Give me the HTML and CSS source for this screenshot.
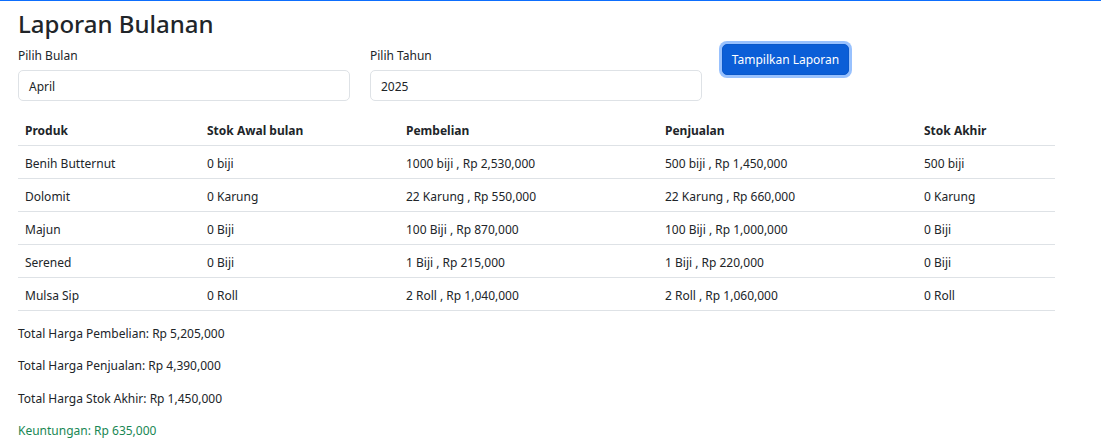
FILE: index.html
```html
<!DOCTYPE html>
<html lang="id">
<head>
<meta charset="utf-8">
<title>Laporan Bulanan</title>
<link rel="stylesheet" href="styles.css">
</head>
<body>
<div class="topline"></div>
<main class="page">
  <h2 class="title">Laporan Bulanan</h2>
  <form class="filters">
    <div class="field">
      <label class="label">Pilih Bulan</label>
      <div class="input">April</div>
    </div>
    <div class="field">
      <label class="label">Pilih Tahun</label>
      <div class="input">2025</div>
    </div>
    <div class="field field-btn">
      <button type="button" class="btn">Tampilkan Laporan</button>
    </div>
  </form>
  <table class="report">
    <colgroup>
      <col class="c1"><col class="c2"><col class="c3"><col class="c4"><col class="c5">
    </colgroup>
    <thead>
      <tr><th>Produk</th><th>Stok Awal bulan</th><th>Pembelian</th><th>Penjualan</th><th>Stok Akhir</th></tr>
    </thead>
    <tbody>
      <tr><td>Benih Butternut</td><td>0 biji</td><td>1000 biji , Rp 2,530,000</td><td>500 biji , Rp 1,450,000</td><td>500 biji</td></tr>
      <tr><td>Dolomit</td><td>0 Karung</td><td>22 Karung , Rp 550,000</td><td>22 Karung , Rp 660,000</td><td>0 Karung</td></tr>
      <tr><td>Majun</td><td>0 Biji</td><td>100 Biji , Rp 870,000</td><td>100 Biji , Rp 1,000,000</td><td>0 Biji</td></tr>
      <tr><td>Serened</td><td>0 Biji</td><td>1 Biji , Rp 215,000</td><td>1 Biji , Rp 220,000</td><td>0 Biji</td></tr>
      <tr><td>Mulsa Sip</td><td>0 Roll</td><td>2 Roll , Rp 1,040,000</td><td>2 Roll , Rp 1,060,000</td><td>0 Roll</td></tr>
    </tbody>
  </table>
  <div class="totals">
    <p>Total Harga Pembelian: Rp 5,205,000</p>
    <p>Total Harga Penjualan: Rp 4,390,000</p>
    <p>Total Harga Stok Akhir: Rp 1,450,000</p>
    <p class="profit">Keuntungan: Rp 635,000</p>
  </div>
</main>
</body>
</html>
```
FILE: styles.css
```css
* { box-sizing: border-box; }
html, body { margin: 0; padding: 0; background: #fff; }
body {
  font-family: "Noto Sans", "Open Sans", sans-serif;
  font-size: 12px;
  line-height: 1.5;
  color: #212529;
}
.topline { height: 1px; background: #0d6efd; }
.page { width: 1037px; margin-left: 18px; padding-top: 8px; }
.title {
  margin: 0 0 7px 0;
  font-size: 24px;
  font-weight: 500;
  line-height: 30px;
}
.filters { display: flex; gap: 20px; }
.field { width: 332px; display: flex; flex-direction: column; }
.label { display: block; margin-bottom: 5px; line-height: 19px; }
.input {
  height: 31px;
  border: 1px solid #dee2e6;
  border-radius: 5px;
  padding: 6px 10px 4px;
  line-height: 19px;
}
.field-btn { margin-top: -2px; }
.btn {
  align-self: flex-start;
  width: 127px;
  height: 31px;
  font: inherit;
  color: #fff;
  background: #0b5ed7;
  border: 1px solid #0a58ca;
  border-radius: 5px;
  box-shadow: 0 0 0 3px rgba(49, 132, 253, 0.5);
  padding: 0;
}
.report {
  width: 100%;
  border-collapse: collapse;
  margin-top: 12px;
}
.c1 { width: 182px; } .c2 { width: 199px; } .c3 { width: 259px; } .c4 { width: 259px; } .c5 { width: 138px; }
.report th, .report td {
  text-align: left;
  padding: 8px 7px 4.8px;
  border-bottom: 1px solid #dee2e6;
  line-height: 19.2px;
}
.report th { font-weight: 700; }
.totals { padding-top: 7px; }
.totals p { margin: 0; height: 32.3px; line-height: 32.3px; }
.profit { color: #198754; }
```
